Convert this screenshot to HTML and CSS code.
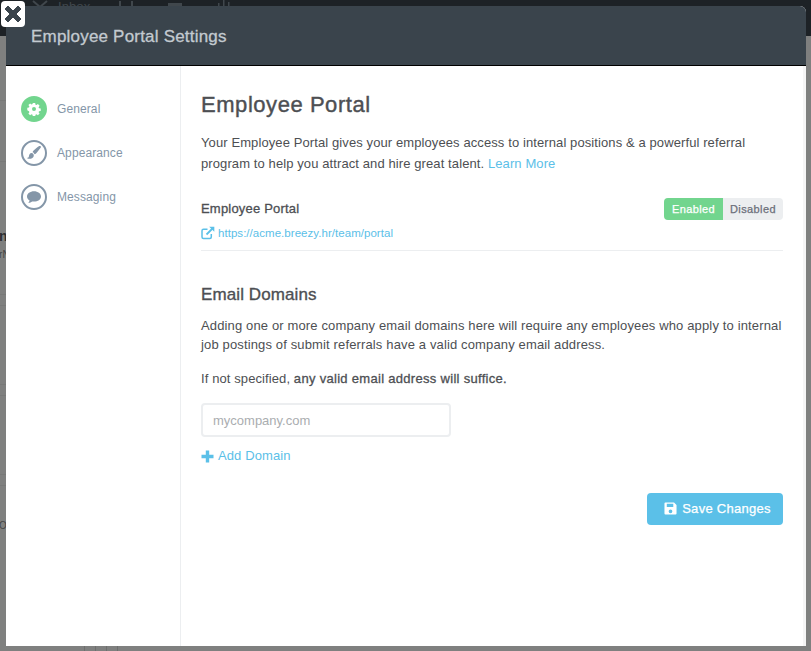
FILE: index.html
```html
<!DOCTYPE html>
<html lang="en">
  <head>
    <meta charset="utf-8">
    <title>Employee Portal Settings</title>
    <link rel="stylesheet" href="styles.css">
  </head>
  <body>
    <div class='topbar'>
        <svg class='topicon' width='16' height='12' viewBox='0 0 16 12'><path fill='none' stroke='#40474c' stroke-width='2' d='M1 1l7 6 7-6'/></svg>
        <span class='topinbox'>Inbox</span>
        <svg class='topicon topcheck' width='14' height='12' viewBox='0 0 14 12'><path fill='none' stroke='#40474c' stroke-width='2' d='M1 1v10h12V1'/></svg>
        <svg class='topicon topcal' width='14' height='12' viewBox='0 0 14 12'><path fill='#40474c' d='M0 3h14v3H0z'/></svg>
        <svg class='topicon topchart' width='14' height='12' viewBox='0 0 14 12'><path fill='#40474c' d='M1 3h1.500v9H1zM6 0h1.500v12H6zM11 2h1.500v10H11z'/></svg>
    </div>
    <div class='behind'>
        <span class='behind-a'>n</span>
        <span class='behind-b'>rN</span>
        <span class='behind-c'>O</span>
    </div>
    <div class='modal'>
        <div class='modal-head'>Employee Portal Settings</div>
        <div class='modal-body'>
            <ul class='side'>
                <li class='sideitem active'>
                    <span class='sideicon'>
                        <svg width='14' height='14' viewBox='0 0 14 14'><path fill='#fff' fill-rule='evenodd' d='M5.800 1h2.400l.3 1.700 1 .4 1.400-1 1.700 1.700-1 1.400.4 1 1.700.3v2.400l-1.700.3-.4 1 1 1.400-1.700 1.700-1.400-1-1 .4-.3 1.700H5.800l-.3-1.700-1-.4-1.400 1-1.700-1.700 1-1.400-.4-1L.3 8.200V5.800L2 5.500l.4-1-1-1.400 1.700-1.700 1.400 1 1-.4zM7 5a2 2 0 1 0 0 4 2 2 0 0 0 0-4z'/></svg>
                    </span>
                    General
                </li>
                <li class='sideitem'>
                    <span class='sideicon'>
                        <svg width='16' height='16' viewBox='0 0 16 16'><path fill='#8496a8' d='M14.600 1.200c.5.4.4 1 0 1.600-1.400 2-3.200 4.300-4.600 5.600-.5.500-1 .8-1.500.9-.2-1-.9-1.800-1.900-2.100.2-.6.500-1.100 1-1.600 1.400-1.400 3.600-3.300 5.600-4.500.5-.2.9-.2 1.400.1zM5.600 8.100c1.200 0 2.200 1 2.200 2.300 0 2.100-2.200 3.400-4.500 3.400-1 0-1.900-.4-2.300-.9 1 0 1.700-.4 1.900-1.400.3-1.900 1-3.400 2.700-3.400z'/></svg>
                    </span>
                    Appearance
                </li>
                <li class='sideitem'>
                    <span class='sideicon'>
                        <svg width='16' height='16' viewBox='0 0 16 16'><path fill='#8496a8' d='M8 2.200c3.900 0 7 2.300 7 5.200s-3.100 5.200-7 5.200c-.6 0-1.200-.1-1.800-.2-1 .8-2.300 1.300-3.900 1.500.6-.7 1.100-1.500 1.300-2.500C2 10.400 1 9 1 7.400c0-2.900 3.100-5.200 7-5.200z'/></svg>
                    </span>
                    Messaging
                </li>
            </ul>
            <div class='content'>
                <h1>Employee Portal</h1>
                <p class='intro'>Your Employee Portal gives your employees access to internal positions &amp; a powerful referral program to help you attract and hire great talent. <a class='link'>Learn More</a></p>
                <div class='portalrow'>
                    <div>
                        <div class='label'>Employee Portal</div>
                        <a class='link portalurl'>
                            <svg width='14' height='14' viewBox='0 0 14 14'><path fill='none' stroke='#5bc0e8' stroke-width='1.500' d='M10.300 8v3c0 1-.5 1.500-1.500 1.500H2.500c-1 0-1.500-.5-1.500-1.500V4.700c0-1 .5-1.500 1.500-1.500h4'/><path fill='none' stroke='#5bc0e8' stroke-width='1.800' d='M5.500 8.500L12 2'/><path fill='#5bc0e8' d='M8.200.7h5.100v5.100z'/></svg>
                            https://acme.breezy.hr/team/portal
                        </a>
                    </div>
                    <div class='toggle'>
                        <span class='toggle-on'>Enabled</span>
                        <span class='toggle-off'>Disabled</span>
                    </div>
                </div>
                <h2>Email Domains</h2>
                <p class='desc'>Adding one or more company email domains here will require any employees who apply to internal job postings of submit referrals have a valid company email address.</p>
                <p class='note'>If not specified, <b>any valid email address will suffice.</b></p>
                <input class='domainbox' type='text' placeholder='mycompany.com'>
                <a class='link adddomain'>
                    <svg width='13' height='13' viewBox='0 0 13 13'><path fill='#5bc0e8' d='M4.800.5h3.400v4.300h4.300v3.400H8.200v4.300H4.800V8.200H.5V4.800h4.300z'/></svg>
                    Add Domain
                </a>
                <div class='actions'>
                    <button class='savebtn'>
                        <svg width='13' height='13' viewBox='0 0 14 14'><path fill='#fff' fill-rule='evenodd' d='M1.500.5h9.300L13.500 3.200v9.300c0 .6-.4 1-1 1h-11c-.6 0-1-.4-1-1v-11c0-.6.4-1 1-1zM3 2v3.500h7V2zm4 6a2 2 0 1 0 0 4 2 2 0 0 0 0-4z'/></svg>
                        Save Changes
                    </button>
                </div>
            </div>
        </div>
    </div>
    <div class='closebtn'>
        <svg width='20' height='20' viewBox='0 0 20 20'><path fill='#3a444c' stroke='#3a444c' stroke-linejoin='round' d='M5 2L10 7l5-5 3 3-5 5 5 5-3 3-5-5-5 5-3-3 5-5-5-5z'/></svg>
    </div>
  </body>
</html>
```

FILE: styles.css
```css
* {
    box-sizing: border-box;
}
body, html {
    height: 100%;
    overflow: hidden;
}
body, ul, h1, h2, p {
    margin: 0;
    padding: 0;
}
body {
    background-color: #7f807f;
    background-image:
        linear-gradient(#787978, #787978), linear-gradient(#787978, #787978),
        linear-gradient(#787978, #787978), linear-gradient(#787978, #787978),
        linear-gradient(#787978, #787978), linear-gradient(#787978, #787978),
        linear-gradient(#787978, #787978), linear-gradient(#787978, #787978),
        linear-gradient(#6e6f6e, #6e6f6e), linear-gradient(#6e6f6e, #6e6f6e),
        linear-gradient(#6e6f6e, #6e6f6e), linear-gradient(#6e6f6e, #6e6f6e);
    background-repeat: no-repeat;
    background-size: 6px 1px, 6px 1px, 6px 1px, 6px 1px, 6px 1px, 6px 1px, 6px 1px, 6px 1px,
        1px 5px, 1px 5px, 1px 5px, 1px 5px;
    background-position: 0 100px, 0 161px, 0 294px, 0 305px, 0 384px, 0 395px, 0 474px, 0 485px,
        84px 646px, 95px 646px, 106px 646px, 117px 646px;
    color: #4d4f53;
    font: 13px/1.4em 'Liberation Sans', Arial, sans-serif;
    letter-spacing: 0.1px;
}
ul {
    list-style: none;
}
.topbar {
    display: flex;
    height: 36px;
    background: #1d2226;
    color: #40474c;
    font-size: 13px;
    line-height: 14px;
    padding-left: 32px;
}
.topicon {
    flex: none;
}
.topinbox {
    margin-left: 10px;
    margin-top: 0;
}
.topcheck {
    margin-left: 29px;
}
.topcal {
    margin-left: 35px;
}
.topchart {
    margin-left: 35px;
}
.behind {
    color: #2d2f31;
    font-size: 12px;
}
.behind span {
    position: absolute;
    left: -1px;
}
.behind-a {
    top: 227px;
    font-weight: bold;
    font-size: 14px;
}
.behind-b {
    top: 246px;
    font-size: 10px;
    color: #444;
}
.behind-c {
    top: 517px;
    color: #444;
    font-size: 10px;
}
.modal {
    position: absolute;
    left: 6px;
    top: 6px;
    width: 800px;
    height: 640px;
    background: #fff;
    border-radius: 6px 6px 0 0;
    display: flex;
    flex-direction: column;
}
.modal-head {
    height: 60px;
    flex: none;
    background: #3a444c;
    border-bottom: 1px solid #000;
    border-radius: 6px 6px 0 0;
    color: #c3cad0;
    font-size: 17px;
    letter-spacing: 0.2px;
    -webkit-text-stroke: 0.3px;
    line-height: 61px;
    padding-left: 25px;
}
.modal-body {
    flex: 1;
    display: flex;
    border-right: 3px solid #f5f5f5;
}
.side {
    width: 175px;
    flex: none;
    border-right: 1px solid #eceef0;
    padding-top: 21px;
}
.sideitem {
    display: flex;
    align-items: center;
    height: 44px;
    padding-left: 15px;
    color: #8496a8;
    font-size: 12px;
}
.sideicon {
    width: 26px;
    height: 26px;
    margin-right: 10px;
    border: 2px solid #8496a8;
    border-radius: 50%;
    display: flex;
    align-items: center;
    justify-content: center;
}
.active .sideicon {
    background: #72d58e;
    border-color: #72d58e;
}
.content {
    flex: 1;
    padding: 26px 20px 0 20px;
}
h1 {
    font-size: 22px;
    font-weight: normal;
    letter-spacing: 0.55px;
    -webkit-text-stroke: 0.4px;
    line-height: 26px;
    color: #4d4f53;
}
.intro {
    margin-top: 14px;
    line-height: 21px;
}
.link {
    color: #5bc0e8;
}
.portalrow {
    display: flex;
    justify-content: space-between;
    margin-top: 25px;
    padding-bottom: 8px;
    border-bottom: 1px solid #eceef0;
}
.label {
    letter-spacing: 0.2px;
    -webkit-text-stroke: 0.3px;
    line-height: 20px;
}
.portalurl {
    display: flex;
    align-items: center;
    gap: 3px;
    margin-top: 5px;
    font-size: 11.5px;
    letter-spacing: 0.04px;
    line-height: 18px;
}
.toggle {
    display: flex;
    height: 22px;
    margin-top: -1px;
    font-size: 11px;
    letter-spacing: 0.4px;
    -webkit-text-stroke: 0.25px;
    line-height: 22px;
    border-radius: 4px;
    overflow: hidden;
}
.toggle-on {
    width: 59px;
    background: #72d58e;
    color: #fff;
    text-align: center;
}
.toggle-off {
    width: 60px;
    background: #eceef0;
    color: #6b6f7a;
    text-align: center;
}
h2 {
    margin-top: 33px;
    font-size: 17px;
    font-weight: normal;
    letter-spacing: 0.1px;
    -webkit-text-stroke: 0.35px;
    line-height: 22px;
}
.desc {
    margin-top: 10px;
    line-height: 19px;
    letter-spacing: 0.14px;
}
.note {
    margin-top: 14px;
    line-height: 21px;
}
.note b {
    font-weight: normal;
    letter-spacing: 0.3px;
    -webkit-text-stroke: 0.3px;
}
.domainbox {
    display: block;
    width: 250px;
    height: 34px;
    margin-top: 14px;
    padding: 0 10px;
    border: 2px solid #eceef0;
    border-radius: 4px;
    font: 13px 'Liberation Sans', Arial, sans-serif;
}
.domainbox::placeholder {
    color: #aaadb0;
}
.adddomain {
    display: flex;
    align-items: center;
    gap: 4px;
    margin-top: 9px;
    line-height: 20px;
}
.actions {
    display: flex;
    justify-content: flex-end;
    margin-top: 27px;
}
.savebtn {
    display: flex;
    align-items: center;
    justify-content: center;
    gap: 5px;
    width: 136px;
    height: 32px;
    padding: 0 0 2px 5px;
    background: #5bc0e8;
    border: 0;
    border-radius: 4px;
    color: #fff;
    font: 13px 'Liberation Sans', Arial, sans-serif;
    letter-spacing: 0.28px;
    -webkit-text-stroke: 0.25px;
}
.closebtn {
    position: absolute;
    left: 1px;
    top: 1px;
    width: 24px;
    height: 26px;
    background: #fff;
    border-radius: 4px;
    display: flex;
    align-items: center;
    justify-content: center;
}
```
